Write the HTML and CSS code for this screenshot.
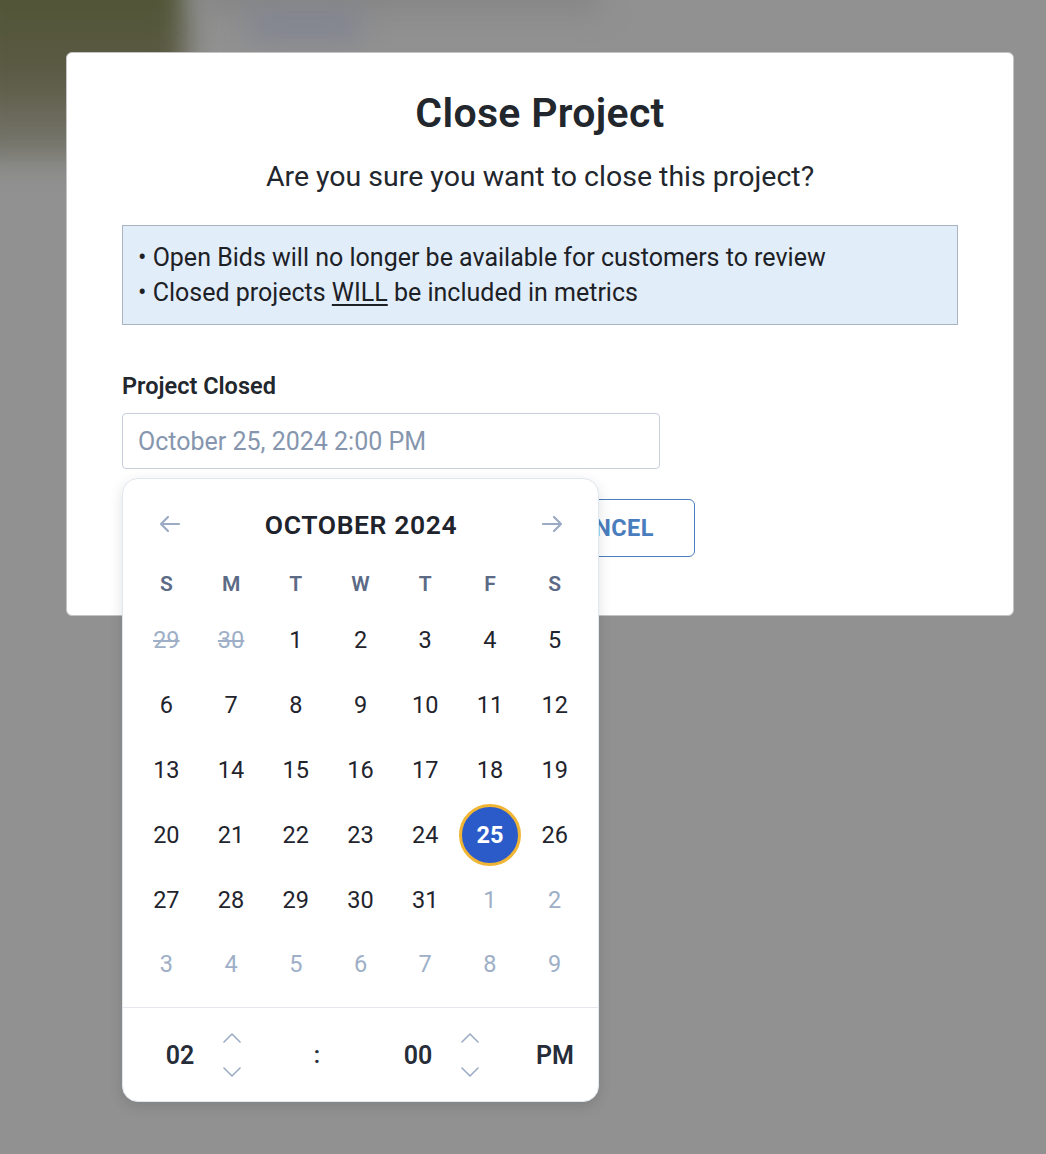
FILE: index.html
```html
<!DOCTYPE html>
<html lang="en">
<head>
    <meta charset="UTF-8">
    <meta name="viewport" content="width=device-width, initial-scale=1.0">
    <title>Close Project</title>
    <link rel="stylesheet" href="styles.css">
</head>
<body>
    <div class="backdrop">
        <div class="blur blur-photo"></div>
        <div class="blur blur-bar"></div>
        <div class="blur blur-link"></div>
    </div>

    <div class="modal">
        <h1 class="modal-title">Close Project</h1>
        <p class="modal-subtitle">Are you sure you want to close this project?</p>

        <div class="notice">
            <div>• Open Bids will no longer be available for customers to review</div>
            <div>• Closed projects <u>WILL</u> be included in metrics</div>
        </div>

        <label class="field-label" for="closedAt">Project Closed</label>
        <div class="picker-wrap">
            <input class="field-input" id="closedAt" type="text" placeholder="October 25, 2024 2:00 PM">

            <div class="calendar">
                <div class="cal-header">
                    <svg class="cal-arrow" viewBox="0 0 24 24" width="24" height="24"><path d="M21 12H3M10 5l-7 7 7 7" /></svg>
                    <span class="cal-month">OCTOBER 2024</span>
                    <svg class="cal-arrow" viewBox="0 0 24 24" width="24" height="24"><path d="M3 12h18M14 5l7 7-7 7" /></svg>
                </div>

                <div class="cal-grid cal-weekdays">
                    <span>S</span><span>M</span><span>T</span><span>W</span><span>T</span><span>F</span><span>S</span>
                </div>

                <div class="cal-grid cal-days">
                    <span class="day muted struck">29</span><span class="day muted struck">30</span><span class="day">1</span><span class="day">2</span><span class="day">3</span><span class="day">4</span><span class="day">5</span>
                    <span class="day">6</span><span class="day">7</span><span class="day">8</span><span class="day">9</span><span class="day">10</span><span class="day">11</span><span class="day">12</span>
                    <span class="day">13</span><span class="day">14</span><span class="day">15</span><span class="day">16</span><span class="day">17</span><span class="day">18</span><span class="day">19</span>
                    <span class="day">20</span><span class="day">21</span><span class="day">22</span><span class="day">23</span><span class="day">24</span><span class="day"><b class="selected">25</b></span><span class="day">26</span>
                    <span class="day">27</span><span class="day">28</span><span class="day">29</span><span class="day">30</span><span class="day">31</span><span class="day muted">1</span><span class="day muted">2</span>
                    <span class="day muted">3</span><span class="day muted">4</span><span class="day muted">5</span><span class="day muted">6</span><span class="day muted">7</span><span class="day muted">8</span><span class="day muted">9</span>
                </div>

                <div class="cal-time">
                    <span class="time-val">02</span>
                    <span class="spinner">
                        <svg viewBox="0 0 18 10" width="18" height="10"><path d="M1 9l8-8 8 8" /></svg>
                        <svg viewBox="0 0 18 10" width="18" height="10"><path d="M1 1l8 8 8-8" /></svg>
                    </span>
                    <span class="time-sep">:</span>
                    <span class="time-val">00</span>
                    <span class="spinner">
                        <svg viewBox="0 0 18 10" width="18" height="10"><path d="M1 9l8-8 8 8" /></svg>
                        <svg viewBox="0 0 18 10" width="18" height="10"><path d="M1 1l8 8 8-8" /></svg>
                    </span>
                    <span></span>
                    <span class="time-val">PM</span>
                </div>
            </div>
        </div>

        <div class="actions">
            <button class="btn btn-outline">CANCEL</button>
        </div>
    </div>
</body>
</html>
```

FILE: styles.css
```css
body {
    margin: 0;
    padding: 52px 0 0 66px;
    background-color: #919191;
    font-family: Roboto, "Liberation Sans", sans-serif;
    color: #22262d;
    height: 1154px;
    box-sizing: border-box;
    overflow: hidden;
}

/* blurred page behind the overlay */
.backdrop {
    position: absolute;
    top: 0;
    left: 0;
    width: 1046px;
    height: 200px;
    overflow: hidden;
}

.blur {
    position: absolute;
    filter: blur(14px);
}

.blur-photo {
    left: -30px;
    top: -30px;
    width: 215px;
    height: 190px;
    background: linear-gradient(180deg, #4d5330 0%, #5b5a45 55%, #7a7a72 100%);
}

.blur-bar {
    left: 200px;
    top: -20px;
    width: 400px;
    height: 32px;
    background-color: #858585;
}

.blur-link {
    left: 250px;
    top: 14px;
    width: 110px;
    height: 22px;
    background-color: #7d8192;
}

.modal {
    position: relative;
    width: 948px;
    box-sizing: border-box;
    padding: 37px 55px 58px;
    background-color: #fff;
    border: 1px solid #c4c4c4;
    border-radius: 6px;
}

.modal-title {
    margin: 0;
    text-align: center;
    font-size: 41px;
    line-height: 46px;
    font-weight: 600;
    letter-spacing: 0.3px;
    color: #22262d;
}

.modal-subtitle {
    margin: 25px 0 0;
    text-align: center;
    font-size: 28.5px;
    line-height: 32px;
    color: #22262d;
}

.notice {
    margin-top: 32px;
    padding: 14px 15px;
    background-color: #e1eefa;
    border: 1px solid #aab3bf;
    font-size: 25px;
    line-height: 35px;
    color: #1d2126;
}

.notice u {
    text-underline-offset: 3px;
}

.field-label {
    display: block;
    margin-top: 48px;
    font-size: 23.5px;
    line-height: 26px;
    font-weight: 600;
    color: #22262d;
}

.picker-wrap {
    position: relative;
    margin-top: 14px;
}

.field-input {
    display: block;
    width: 538px;
    height: 56px;
    box-sizing: border-box;
    padding: 0 15px;
    border: 1px solid #c6cfdb;
    border-radius: 4px;
    font-family: inherit;
    font-size: 25px;
    color: #22262d;
    background: #fff;
}

.field-input::placeholder {
    color: #8696ae;
}

.actions {
    display: flex;
    margin-top: 30px;
    padding-left: 399px;
}

.btn {
    height: 58px;
    border-radius: 6px;
    font-family: inherit;
    font-size: 23.5px;
    font-weight: 700;
    letter-spacing: 0.5px;
}

.btn-outline {
    width: 174px;
    background-color: #fff;
    border: 1px solid #4a7dbd;
    color: #4a7dbd;
}

/* date picker popover */
.calendar {
    position: absolute;
    top: 65px;
    left: 0;
    z-index: 2;
    width: 477px;
    height: 624px;
    box-sizing: border-box;
    padding-top: 23px;
    background-color: #fff;
    border: 1px solid #e1e7ef;
    border-radius: 16px;
    box-shadow: 0 4px 14px rgba(0, 0, 0, 0.12);
}

.cal-header {
    display: flex;
    align-items: center;
    justify-content: space-between;
    height: 44px;
    padding: 0 34px 0 35px;
}

.cal-arrow {
    fill: none;
    stroke: #9babc4;
    stroke-width: 2.2;
    stroke-linecap: round;
    stroke-linejoin: round;
}

.cal-month {
    font-size: 26.5px;
    font-weight: 600;
    letter-spacing: 0.6px;
    color: #1e232c;
}

.cal-grid {
    display: grid;
    grid-template-columns: repeat(7, 1fr);
    padding: 0 11px;
}

.cal-weekdays {
    margin-top: 23px;
    height: 30px;
    align-items: center;
    text-align: center;
    font-size: 21px;
    font-weight: 600;
    color: #5b6a85;
}

.cal-days {
    margin-top: 9px;
    padding-bottom: 10px;
    border-bottom: 1px solid #e4e8ee;
}

.day {
    display: flex;
    align-items: center;
    justify-content: center;
    height: 64.8px;
    font-size: 23.5px;
    color: #1f242d;
}

.day.muted {
    color: #9eafc7;
}

.day.struck {
    text-decoration: line-through;
    text-decoration-thickness: 2px;
}

.selected {
    display: flex;
    align-items: center;
    justify-content: center;
    width: 62px;
    height: 62px;
    box-sizing: border-box;
    border: 3px solid #f1b536;
    border-radius: 50%;
    background-color: #2b5bc9;
    color: #fff;
    font-weight: 700;
}

.cal-time {
    display: grid;
    grid-template-columns: 84px 20px 150px 52px 52px 24px 70px;
    align-items: center;
    height: 93px;
    padding: 2px 0 0 15px;
    box-sizing: border-box;
    text-align: center;
}

.time-val {
    font-size: 25px;
    font-weight: 600;
    color: #262d39;
}

.time-sep {
    font-size: 23px;
    font-weight: 600;
    color: #262d39;
}

.spinner {
    display: flex;
    flex-direction: column;
    align-items: center;
    gap: 24px;
    margin-top: -1px;
}

.spinner svg {
    fill: none;
    stroke: #9babc4;
    stroke-width: 1.6;
    stroke-linecap: round;
    stroke-linejoin: round;
}
```
